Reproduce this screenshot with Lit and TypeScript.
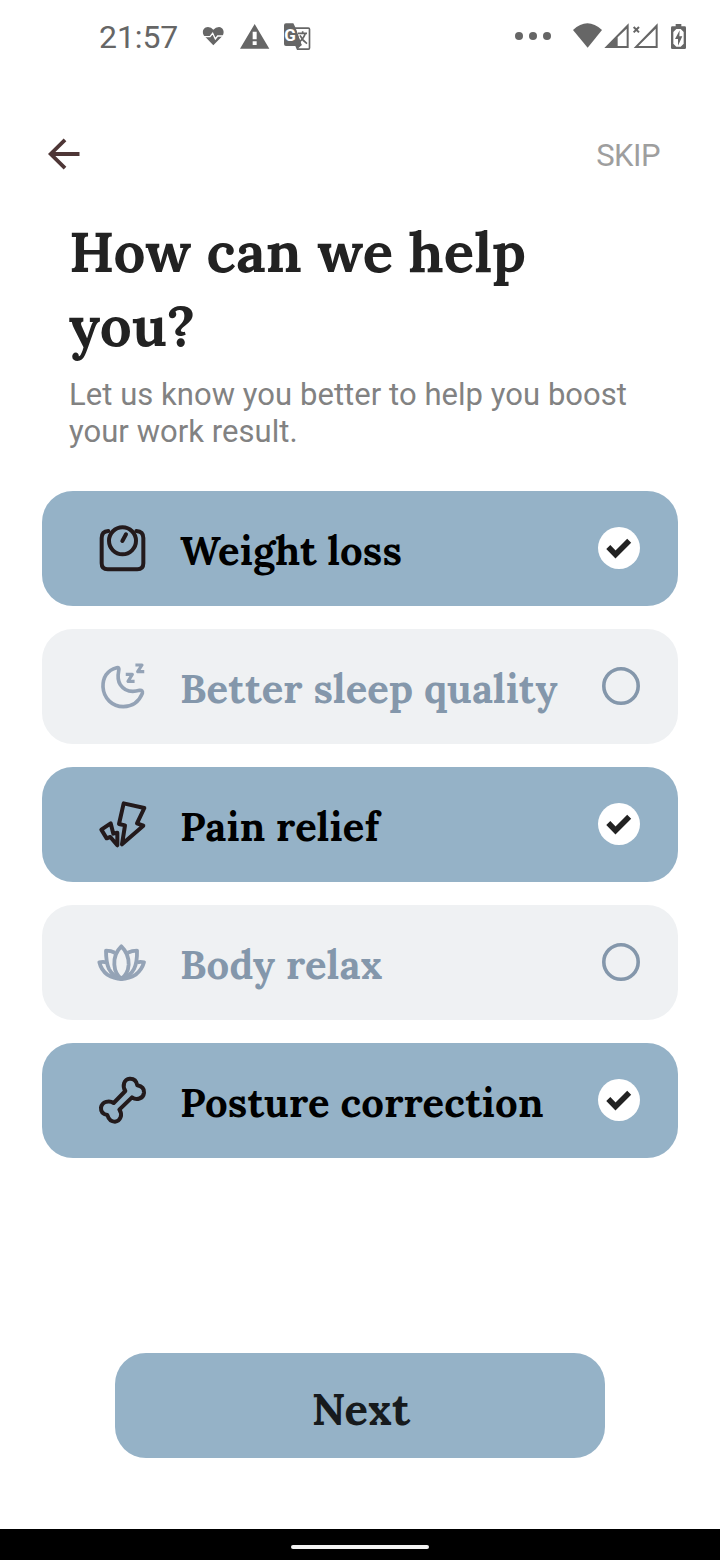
import { LitElement, html, svg, css } from "lit";
import { customElement, property, state } from "lit/decorators.js";

type Goal = { id: string; label: string; on: boolean };

const icons: Record<string, unknown> = {
  scale: svg`<svg viewBox="0 3 225 225" fill="none" stroke="currentColor" stroke-width="12" stroke-linecap="round" stroke-linejoin="round">
    <circle cx="112.500" cy="92.500" r="40.500"/>
    <path d="M70 63Q50 64 50 84V160Q50 178 68 178H157Q175 178 175 160V84Q175 64 154 63"/>
    <path d="M112 93L123 73"/></svg>`,
  moon: svg`<svg viewBox="0 -3 225 225" fill="none" stroke="currentColor" stroke-width="11" stroke-linejoin="round" stroke-linecap="round">
    <path d="M95 53C66 60 53 84 54 111C56 145 82 170 115 170C142 169 162 155 172 130Q174 120 164 121C140 128 119 123 106 104C98 92 98 78 101 63Q104 51 95 53Z"/>
    <path d="M127 73H142L129 94H144M156 45H171L158 65H173" stroke-width="9.500" stroke-linecap="square"/></svg>`,
  bolt: svg`<svg viewBox="0 6 225 225" fill="none" stroke="currentColor" stroke-width="12" stroke-linejoin="round">
    <path d="M116 55L178 69L156 115L175 122L111 178L120 121L102 117Z"/>
    <path d="M77 115L49 134L65 160L76 156L97 181V143L85 146Z"/></svg>`,
  lotus: svg`<svg viewBox="0 0 225 225" fill="none" stroke="currentColor" stroke-width="11.500" stroke-linejoin="round">
    <path d="M109 64Q86 86 88 119Q90 148 109 161Q129 148 131 119Q132 86 109 64Z"/>
    <path d="M90 83Q78 77 63 77Q63 112 72 132Q82 152 109 162Q137 152 147 132Q157 112 156 77Q141 77 128 83"/>
    <path d="M64 112Q54 109 43 112Q49 136 67 149Q87 161 109 162Q132 161 152 149Q170 136 177 112Q167 109 156 112"/></svg>`,
  bone: svg`<svg viewBox="0 0 225 225" fill="none" stroke="currentColor" stroke-width="12" stroke-linejoin="round">
    <path d="M86 120L121 84C111 70 117 48 134 47Q153 46 157 67Q178 71 177 89C175 108 154 112 141 103L103 140C114 155 106 175 90 176Q73 176 67 156Q47 153 48 134C51 115 73 111 86 120Z"/></svg>`,
};

@customElement("status-bar")
class StatusBar extends LitElement {
  static styles = css`
    :host { display: flex; height: 74px; align-items: flex-start; color: #666; box-sizing: border-box; padding: 10px 10px 0 99px; }
    .time { width: 101px; font: 400 32px/55px Roboto, sans-serif; letter-spacing: -0.1px; }
    .alerts { width: 120px; height: 55px; }
    .signals { width: 210px; height: 55px; margin-left: auto; }
    .g { font: 700 51px Roboto, sans-serif; }
  `;
  render() {
    return html`
      <div class="time">21:57</div>
      <svg class="alerts" viewBox="330 0 360 165" fill="currentColor">
        <path d="M370 106L341 76C334 60 344 51 354 51Q364 51 370 59Q377 51 387 51C399 52 405 65 398 77Z"/>
        <path d="M338 80H360L368 70L376 87L383 78H402" fill="none" stroke="#fff" stroke-width="4"/>
        <path fill-rule="evenodd" d="M494 42L538 116H450ZM488 65V88H500V65ZM488 94V105H500V94Z"/>
        <path d="M588 40H610L616 52H655Q661 52 661 58V114Q661 120 655 120H621L616 108H588Q582 108 582 102V46Q582 40 588 40Z"/>
        <path d="M618 57H656V115H625L635 105Z" fill="#fff"/>
        <path d="M624 70H651M638 64V70M646 70Q642 85 626 98M630 76Q637 91 651 101" fill="none" stroke="currentColor" stroke-width="5"/>
        <path d="M617 57L635 106L620 108Z"/>
        <text class="g" x="583" y="94" fill="#fff">G</text>
      </svg>
      <svg class="signals" viewBox="0 0 630 165" fill="currentColor">
        <circle cx="57" cy="78" r="12"/><circle cx="99" cy="78" r="12"/><circle cx="141" cy="78" r="12"/>
        <path d="M219 60Q262 20 306 60L263 113Z"/>
        <path fill-rule="evenodd" d="M386 40V114H313ZM380 56L353 82V108H380Z"/>
        <path fill-rule="evenodd" d="M473 40V114H401ZM467 56L415 108H467Z"/>
        <path d="M401 51L417 67M417 51L401 67" stroke="currentColor" stroke-width="6"/>
        <path d="M527 42H544V49H554Q558 49 558 53V113Q558 117 554 117H517Q513 117 513 113V53Q513 49 517 49H527Z"/>
        <path d="M529 57H542L551 66V101L542 110H529L520 101V66Z" fill="#fff"/>
        <path d="M539 61L525 87H534V107L547 79H538Z"/>
      </svg>`;
  }
}

@customElement("goal-row")
class GoalRow extends LitElement {
  @property({ attribute: false }) goal!: Goal;
  static styles = css`
    :host { display: block; }
    .row { display: flex; align-items: center; width: 100%; height: 115px; box-sizing: border-box; padding: 0 38px 0 43px; border: 0; border-radius: 31px; background: #eff1f3; color: #8497ab; text-align: left; }
    .row.on { background: #95b2c7; color: #000; }
    .icon { width: 75px; height: 75px; flex: none; color: #94a3b6; }
    .on .icon { color: #231a1c; }
    .icon svg { display: block; width: 75px; height: 75px; }
    .label { flex: 1; padding: 5px 0 0 20px; white-space: nowrap; font: 700 40px/56px Lora, "Liberation Serif", serif; letter-spacing: 0.17px; }
    .mark { flex: none; display: block; margin-top: -1px; }
  `;
  render() {
    const g = this.goal;
    return html`<button class="row ${g.on ? "on" : ""}" @click=${() => this.dispatchEvent(new CustomEvent("toggle"))}>
      <span class="icon">${icons[g.id]}</span>
      <span class="label">${g.label}</span>
      ${g.on
        ? html`<svg class="mark" width="42" height="42" viewBox="0 0 42 42"><circle cx="21" cy="21" r="21" fill="#fff"/><path d="M10.300 20L17.500 27.500L31.200 13.700" fill="none" stroke="#222" stroke-width="5.600"/></svg>`
        : html`<svg class="mark" width="38" height="38" viewBox="0 0 38 38"><circle cx="19" cy="19" r="17.200" fill="none" stroke="#8497ab" stroke-width="3.600"/></svg>`}
    </button>`;
  }
}

@customElement("app-root")
class AppRoot extends LitElement {
  @state() goals: Goal[] = [
    { id: "scale", label: "Weight loss", on: true },
    { id: "moon", label: "Better sleep quality", on: false },
    { id: "bolt", label: "Pain relief", on: true },
    { id: "lotus", label: "Body relax", on: false },
    { id: "bone", label: "Posture correction", on: true },
  ];
  static styles = css`
    :host { display: flex; flex-direction: column; height: 1560px; background: #fff; overflow: hidden; }
    .top { display: flex; justify-content: space-between; align-items: center; height: 60px; padding: 50px 60px 0 47px; }
    .back { display: block; }
    .skip { font: 400 31px/40px Roboto, sans-serif; letter-spacing: -0.5px; color: #9e9e9e; margin-top: 4px; }
    h1 { margin: 31px 69px 0; font: 700 56.500px/73.500px Lora, "Liberation Serif", serif; letter-spacing: 0.25px; color: #222; }
    .sub { margin: 14px 69px 0; font: 400 31px/37px Roboto, sans-serif; letter-spacing: 0.05px; color: #828282; white-space: nowrap; }
    .list { display: flex; flex-direction: column; gap: 23px; margin: 41px 42px 0; }
    .next { width: 490px; height: 105px; margin: 195px auto 0; padding: 6px 0 0 2px; box-sizing: border-box; border: 0; border-radius: 31px; background: #95b2c7; color: #161a1d; font: 700 43.500px/56px Lora, "Liberation Serif", serif; letter-spacing: 0.15px; }
    .nav { display: flex; align-items: center; justify-content: center; height: 31px; padding-top: 5px; box-sizing: border-box; margin-top: auto; background: #000; }
    .pill { width: 138px; height: 4px; border-radius: 2px; background: #f2f2f2; }
  `;
  toggle(i: number) {
    this.goals = this.goals.map((g, j) => (j === i ? { ...g, on: !g.on } : g));
  }
  render() {
    return html`
      <status-bar></status-bar>
      <div class="top">
        <svg class="back" width="33" height="32" viewBox="0 0 33 32" fill="none" stroke="#4e3636" stroke-width="3.800"><path d="M32.500 16H4M18 1.800L3.700 16L18 30.200"/></svg>
        <span class="skip">SKIP</span>
      </div>
      <h1>How can we help<br />you?</h1>
      <div class="sub">Let us know you better to help you boost<br />your work result.</div>
      <div class="list">${this.goals.map((g, i) => html`<goal-row .goal=${g} @toggle=${() => this.toggle(i)}></goal-row>`)}</div>
      <button class="next">Next</button>
      <div class="nav"><div class="pill"></div></div>`;
  }
}
